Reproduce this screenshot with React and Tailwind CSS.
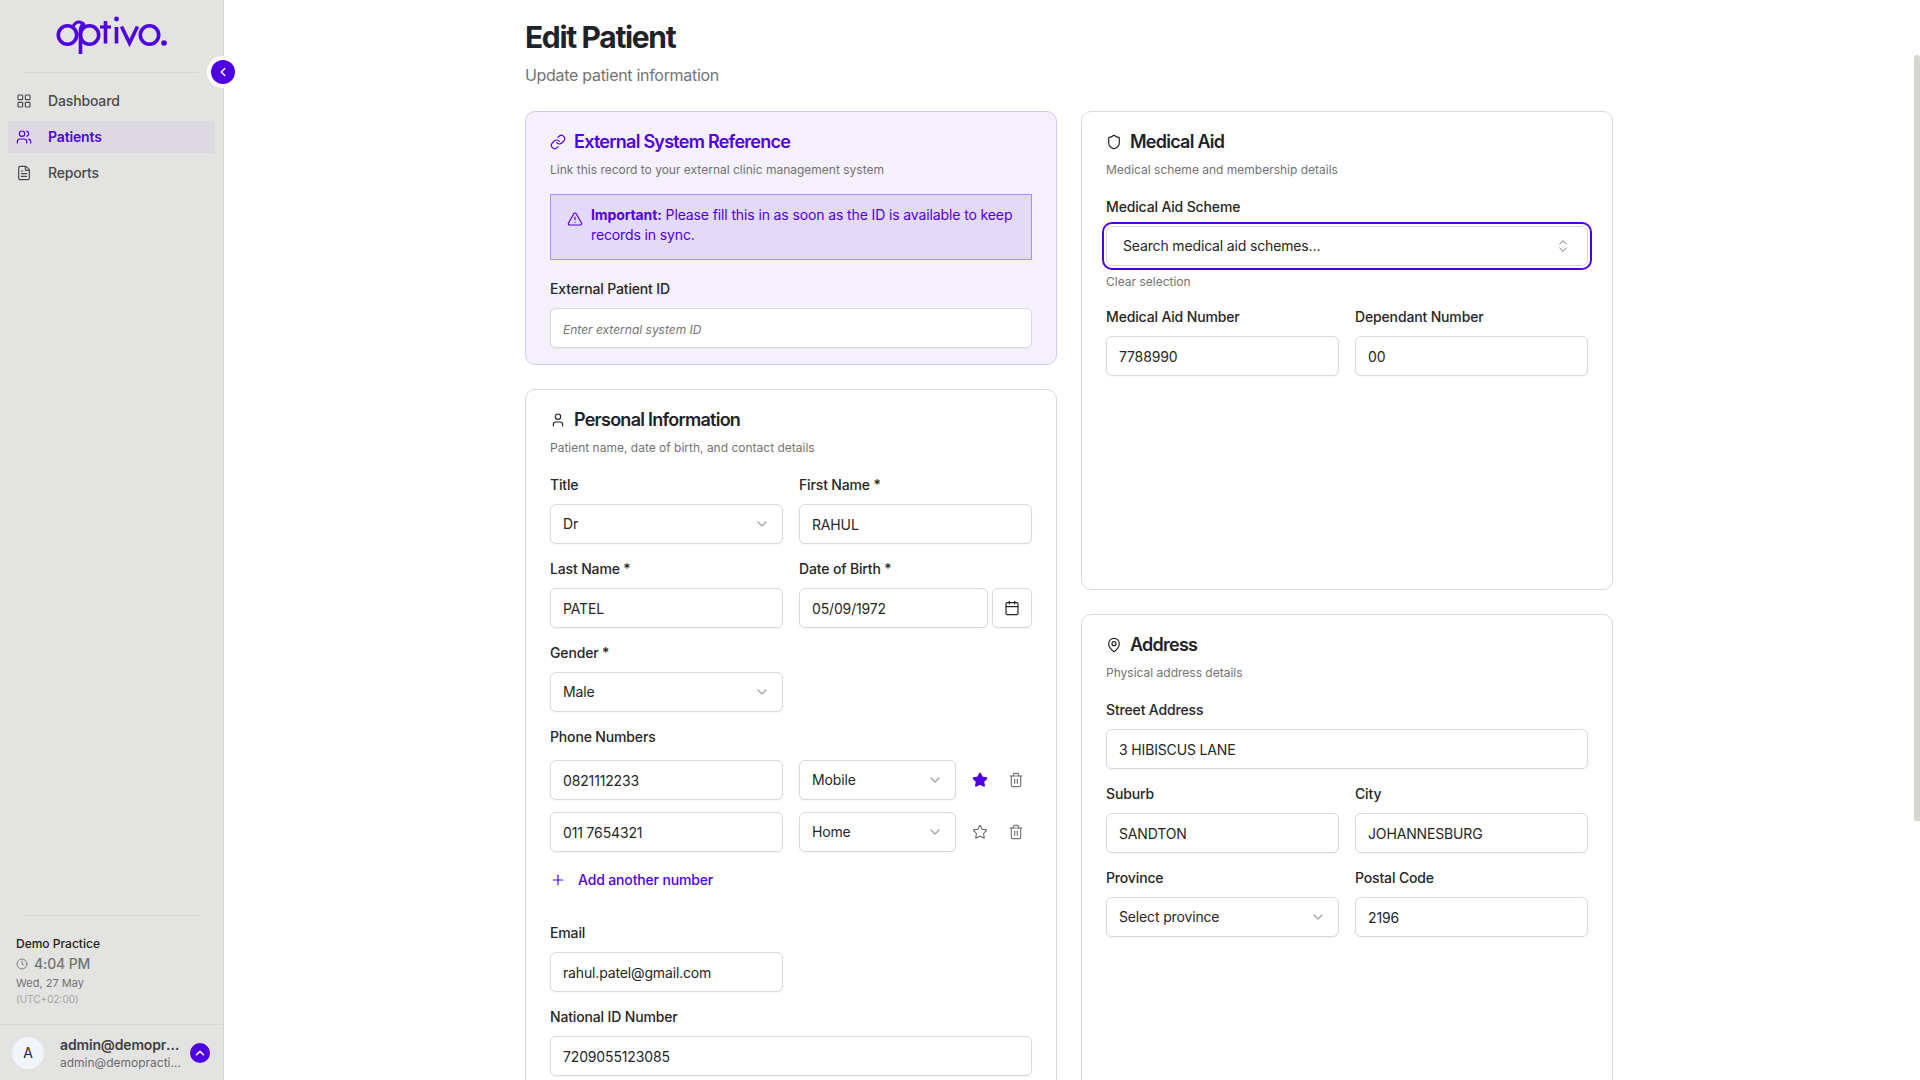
import { LayoutGrid, Users, FileText, Link, TriangleAlert, User, Shield, MapPin, Calendar, ChevronDown, ChevronsUpDown, Star, Trash2, Plus, Clock, ChevronLeft, ChevronUp } from "lucide-react"

function Logo() {
  return (
    <svg width="125" height="50" viewBox="50 10 125 50" fill="none" stroke="#4f00e0" strokeWidth="3.6" strokeLinecap="round">
      <circle cx="67.5" cy="35" r="9.200" />
      <circle cx="89.5" cy="35" r="9.200" />
      <path d="M80.5 54V31c0-4 1.500-6.500 4-8" strokeLinecap="butt" />
      <path d="M73 26.500c1.500-3 4-4.500 6-4.500s3.500 1 5 3" strokeWidth="3" strokeLinecap="butt" />
      <path d="M105.500 21V43.500" strokeLinecap="butt" />
      <path d="M100 27H111" strokeLinecap="butt" strokeWidth="3.200" />
      <path d="M116.500 27V43.500" strokeLinecap="butt" />
      <circle cx="116.500" cy="19" r="2.400" fill="#4f00e0" stroke="none" />
      <path d="M121.500 26.500L129.500 43L137.500 26.500" strokeLinecap="butt" strokeLinejoin="miter" />
      <circle cx="149.500" cy="35" r="9.200" />
      <circle cx="164" cy="43" r="2.800" fill="#4f00e0" stroke="none" />
    </svg>
  )
}

function NavItem({ icon: Icon, label, active }) {
  return (
    <div className={"flex items-center h-8 px-2 gap-4 text-sm " + (active ? "bg-[#dcdae0] text-[#4f00e0] font-semibold" : "text-[#4a4a4a] font-medium")}>
      <Icon size={16} strokeWidth={1.75} />
      <span>{label}</span>
    </div>
  )
}

function Sidebar() {
  return (
    <aside className="relative flex flex-col shrink-0 w-[224px] h-screen bg-[#e3e3e2] border-r border-[#d4d4d2]">
      <div className="h-[72px] pl-[50px] pt-[10px] overflow-hidden">
        <Logo />
      </div>
      <div className="mx-6 h-px bg-[#d6d6d4]" />
      <nav className="mt-3 mx-2 flex flex-col gap-1">
        <NavItem icon={LayoutGrid} label="Dashboard" />
        <NavItem icon={Users} label="Patients" active />
        <NavItem icon={FileText} label="Reports" />
      </nav>
      <div className="absolute left-[207px] top-[56px] z-10 flex items-center justify-center w-8 h-8 rounded-full bg-white">
        <div className="flex items-center justify-center w-6 h-6 rounded-full bg-[#4f00e0] text-white">
          <ChevronLeft size={14} strokeWidth={2.5} />
        </div>
      </div>
      <div className="mt-auto">
        <div className="mx-6 h-px bg-[#d6d6d4]" />
        <div className="px-4 pt-5 pb-[17px]">
          <div className="text-xs leading-4 font-medium tracking-normal text-[#222]">Demo Practice</div>
          <div className="mt-[2px] flex items-center gap-[6px] text-sm leading-5 font-medium text-[#737373]">
            <Clock size={12} strokeWidth={1.75} />
            <span>4:04 PM</span>
          </div>
          <div className="mt-px text-[11px] leading-4 tracking-normal text-[#737373]">Wed, 27 May</div>
          <div className="text-[10px] leading-4 tracking-normal text-[#a3a3a3]">(UTC+02:00)</div>
        </div>
        <div className="flex items-center h-[56px] pl-3 pr-[13px] border-t border-[#d6d6d4]">
          <div className="flex items-center justify-center shrink-0 w-8 h-8 rounded-full bg-[#f1f5f9] text-sm text-[#262626]">A</div>
          <div className="ml-4 w-[123px] min-w-0">
            <div className="truncate text-sm leading-5 font-semibold text-[#3f3f46]">admin@demopractice.com</div>
            <div className="truncate text-xs leading-4 tracking-normal text-[#6b6b6b]">admin@demopractice.com</div>
          </div>
          <div className="ml-auto flex items-center justify-center shrink-0 w-5 h-5 rounded-full bg-[#4f00e0] text-white">
            <ChevronUp size={14} strokeWidth={2.5} />
          </div>
        </div>
      </div>
    </aside>
  )
}

function Card({ icon: Icon, title, sub, tinted, className, children }) {
  return (
    <section className={"rounded-[10px] border px-6 py-4 " + (tinted ? "bg-[#f4f0fc] border-[#d6c8f7] " : "bg-white border-[#d9d9d6] ") + (className || "")}>
      <h2 className={"flex items-center gap-2 h-7 text-lg font-semibold tracking-[-0.75px] " + (tinted ? "text-[#4f00e0]" : "text-[#1f2328]")}>
        <Icon size={16} strokeWidth={1.75} />
        {title}
      </h2>
      <p className="mt-[6px] text-xs leading-4 tracking-normal text-[#737373]">{sub}</p>
      {children}
    </section>
  )
}

function Field({ label, children }) {
  return (
    <div className="flex flex-col gap-[10px] min-w-0">
      <label className="text-sm leading-[18px] font-medium text-[#262626]">{label}</label>
      {children}
    </div>
  )
}

function TextInput({ value, placeholder }) {
  return (
    <input
      readOnly
      defaultValue={value}
      placeholder={placeholder}
      className="w-full min-w-0 h-10 px-3 pt-px rounded-md border border-[#d9d9d6] bg-white text-sm text-[#262626] shadow-xs outline-none placeholder:italic placeholder:text-xs placeholder:tracking-normal placeholder:text-[#737373]"
    />
  )
}

function SelectBox({ value }) {
  return (
    <div className="flex items-center justify-between w-full h-10 pl-3 pr-3 rounded-md border border-[#d9d9d6] bg-white text-sm text-[#262626] shadow-xs">
      <span>{value}</span>
      <ChevronDown size={16} className="text-[#a3a3a3]" />
    </div>
  )
}

function PhoneRow({ number, type, primary }) {
  return (
    <div className="grid grid-cols-2 gap-4">
      <TextInput value={number} />
      <div className="flex items-center gap-2">
        <div className="flex-1 min-w-0"><SelectBox value={type} /></div>
        <div className="flex items-center gap-1 shrink-0 text-[#737373]">
          <button className="flex items-center justify-center w-8 h-8">
            {primary ? <Star size={16} className="text-[#4f00e0] fill-[#4f00e0]" /> : <Star size={16} strokeWidth={1.75} />}
          </button>
          <button className="flex items-center justify-center w-8 h-8">
            <Trash2 size={16} strokeWidth={1.75} />
          </button>
        </div>
      </div>
    </div>
  )
}

export default function App() {
  return (
    <div className="relative flex h-screen overflow-hidden bg-white tracking-[-0.15px] font-['Inter',sans-serif]">
      <Sidebar />
      <main className="flex-1 min-w-0 h-screen overflow-hidden pr-[6px]">
        <div className="mx-auto w-[1088px] pt-[19px]">
          <h1 className="text-3xl leading-9 font-bold tracking-[-1.35px] text-[#1f2328]">Edit Patient</h1>
          <p className="mt-2 mb-6 text-base leading-6 tracking-[-0.3px] text-[#737373]">Update patient information</p>
          <div className="grid grid-cols-2 gap-6">
            <div className="flex flex-col gap-6">
              <Card tinted icon={Link} title="External System Reference" sub="Link this record to your external clinic management system">
                <div className="mt-4 flex items-start gap-2 pl-4 pr-3 pt-[10px] pb-[14px] border border-[#ab8ff0] bg-[#e3d9f8] text-sm leading-5 tracking-[-0.12px] text-[#4f00e0]">
                  <TriangleAlert size={16} strokeWidth={1.75} className="shrink-0 mt-[6px]" />
                  <p><strong className="font-bold">Important:</strong> Please fill this in as soon as the ID is available to keep records in sync.</p>
                </div>
                <div className="mt-5">
                  <Field label="External Patient ID"><TextInput placeholder="Enter external system ID" /></Field>
                </div>
              </Card>
              <Card icon={User} title="Personal Information" sub="Patient name, date of birth, and contact details" className="pb-10">
                <div className="mt-5 grid grid-cols-2 gap-4">
                  <Field label="Title"><SelectBox value="Dr" /></Field>
                  <Field label="First Name *"><TextInput value="RAHUL" /></Field>
                  <Field label="Last Name *"><TextInput value="PATEL" /></Field>
                  <Field label="Date of Birth *">
                    <div className="flex gap-1">
                      <TextInput value="05/09/1972" />
                      <button className="flex items-center justify-center shrink-0 w-10 h-10 rounded-md border border-[#d9d9d6] bg-white text-[#262626] shadow-xs">
                        <Calendar size={16} strokeWidth={1.75} />
                      </button>
                    </div>
                  </Field>
                  <Field label="Gender *"><SelectBox value="Male" /></Field>
                </div>
                <div className="mt-4">
                  <label className="block mb-[14px] text-sm leading-[18px] font-medium text-[#262626]">Phone Numbers</label>
                  <div className="flex flex-col gap-3">
                    <PhoneRow number="0821112233" type="Mobile" primary />
                    <PhoneRow number="011 7654321" type="Home" />
                  </div>
                  <button className="mt-3 flex items-center gap-3 h-8 text-sm font-medium text-[#4f00e0]">
                    <Plus size={16} strokeWidth={1.75} />
                    Add another number
                  </button>
                </div>
                <div className="mt-7 grid grid-cols-2 gap-4">
                  <Field label="Email"><TextInput value="rahul.patel@gmail.com" /></Field>
                  <div className="col-span-2">
                    <Field label="National ID Number"><TextInput value="7209055123085" /></Field>
                  </div>
                </div>
              </Card>
            </div>
            <div className="flex flex-col gap-6">
              <Card icon={Shield} title="Medical Aid" sub="Medical scheme and membership details" className="h-[479px] shrink-0">
                <div className="mt-5">
                  <Field label="Medical Aid Scheme">
                    <div className="flex items-center justify-between h-10 px-4 rounded-md border border-[#d9d9d6] bg-white text-sm text-[#262626] ring-2 ring-[#4f00e0] ring-offset-2 ring-offset-white">
                      <span>Search medical aid schemes...</span>
                      <ChevronsUpDown size={16} strokeWidth={1.5} className="text-[#737373]" />
                    </div>
                  </Field>
                </div>
                <div className="mt-2 text-xs leading-4 tracking-normal text-[#737373]">Clear selection</div>
                <div className="mt-[18px] grid grid-cols-2 gap-4">
                  <Field label="Medical Aid Number"><TextInput value="7788990" /></Field>
                  <Field label="Dependant Number"><TextInput value="00" /></Field>
                </div>
              </Card>
              <Card icon={MapPin} title="Address" sub="Physical address details" className="flex-1">
                <div className="mt-5 grid grid-cols-2 gap-4">
                  <div className="col-span-2">
                    <Field label="Street Address"><TextInput value="3 HIBISCUS LANE" /></Field>
                  </div>
                  <Field label="Suburb"><TextInput value="SANDTON" /></Field>
                  <Field label="City"><TextInput value="JOHANNESBURG" /></Field>
                  <Field label="Province"><SelectBox value="Select province" /></Field>
                  <Field label="Postal Code"><TextInput value="2196" /></Field>
                </div>
              </Card>
            </div>
          </div>
        </div>
      </main>
      <div className="absolute right-0 top-[55px] w-[6px] h-[766px] rounded-t-[3px] bg-[#d6d6d2]" />
    </div>
  )
}
